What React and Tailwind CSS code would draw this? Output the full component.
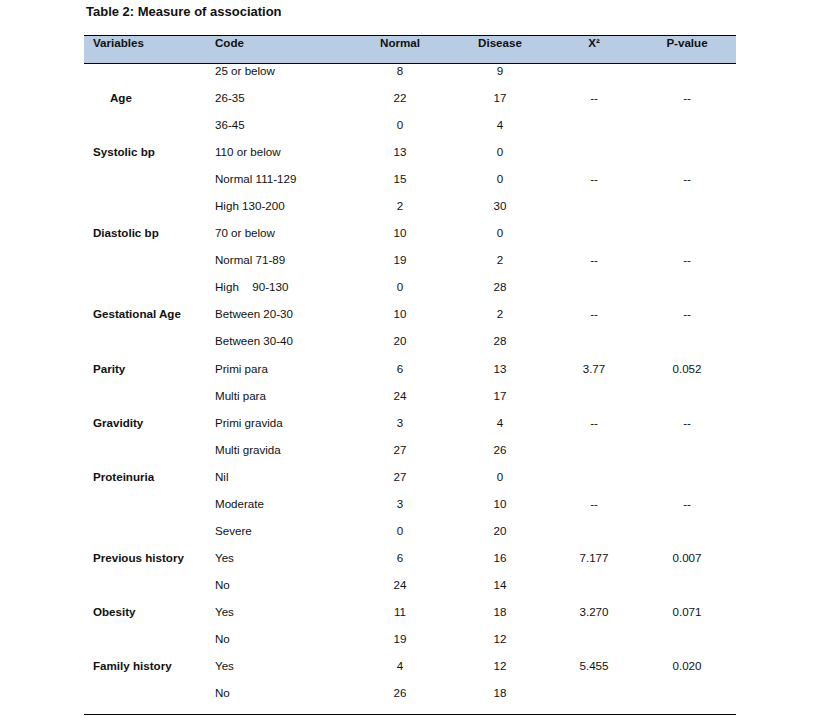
import React from 'react';

// ── Filas de la tabla ────────────────────────────────────────────────────────
const rows = [
    { code: '25 or below', normal: '8', disease: '9' },
    { label: 'Age', indent: true, code: '26-35', normal: '22', disease: '17', x2: '--', p: '--' },
    { code: '36-45', normal: '0', disease: '4' },
    { label: 'Systolic bp', code: '110 or below', normal: '13', disease: '0' },
    { code: 'Normal 111-129', normal: '15', disease: '0', x2: '--', p: '--' },
    { code: 'High 130-200', normal: '2', disease: '30' },
    { label: 'Diastolic bp', code: '70 or below', normal: '10', disease: '0' },
    { code: 'Normal 71-89', normal: '19', disease: '2', x2: '--', p: '--' },
    { code: <>High<span className="ml-[13.5px]">90-130</span></>, normal: '0', disease: '28' },
    { label: 'Gestational Age', code: 'Between 20-30', normal: '10', disease: '2', x2: '--', p: '--' },
    { code: 'Between 30-40', normal: '20', disease: '28' },
    { label: 'Parity', code: 'Primi para', normal: '6', disease: '13', x2: '3.77', p: '0.052' },
    { code: 'Multi para', normal: '24', disease: '17' },
    { label: 'Gravidity', code: 'Primi gravida', normal: '3', disease: '4', x2: '--', p: '--' },
    { code: 'Multi gravida', normal: '27', disease: '26' },
    { label: 'Proteinuria', code: 'Nil', normal: '27', disease: '0' },
    { code: 'Moderate', normal: '3', disease: '10', x2: '--', p: '--' },
    { code: 'Severe', normal: '0', disease: '20' },
    { label: 'Previous history', code: 'Yes', normal: '6', disease: '16', x2: '7.177', p: '0.007' },
    { code: 'No', normal: '24', disease: '14' },
    { label: 'Obesity', code: 'Yes', normal: '11', disease: '18', x2: '3.270', p: '0.071' },
    { code: 'No', normal: '19', disease: '12' },
    { label: 'Family history', code: 'Yes', normal: '4', disease: '12', x2: '5.455', p: '0.020' },
    { code: 'No', normal: '26', disease: '18' },
];

const cols = 'grid grid-cols-[124px_142px_100px_100px_88px_98px]';

const App = () => (
    <div className="min-h-[720px] w-[814px] bg-white text-[#111] font-['Liberation_Sans',Arial,sans-serif]">
        <h1 className="pt-[4px] ml-[86px] text-[13px] leading-[16px] font-bold">Table 2: Measure of association</h1>

        <div className="ml-[84px] w-[652px] mt-[15px] text-[11.6px] leading-[14px]">
            {/* Cabecera */}
            <div className={`${cols} h-[29px] bg-[#b8cce4] border-y border-black font-bold`}>
                <div className="pl-[9px]">Variables</div>
                <div className="pl-[7px]">Code</div>
                <div className="text-center">Normal</div>
                <div className="text-center">Disease</div>
                <div className="text-center">X²</div>
                <div className="text-center">P-value</div>
            </div>

            {rows.map((r, i) => (
                <div key={i} className={`${cols} h-[27.05px]`}>
                    <div className={`font-bold ${r.indent ? 'pl-[26px]' : 'pl-[9px]'}`}>{r.label}</div>
                    <div className="pl-[7px] whitespace-nowrap">{r.code}</div>
                    <div className="text-center">{r.normal}</div>
                    <div className="text-center">{r.disease}</div>
                    <div className="text-center">{r.x2}</div>
                    <div className="text-center">{r.p}</div>
                </div>
            ))}

            <div className="mt-[1px] border-t border-black" />
        </div>
    </div>
);

export default App;
